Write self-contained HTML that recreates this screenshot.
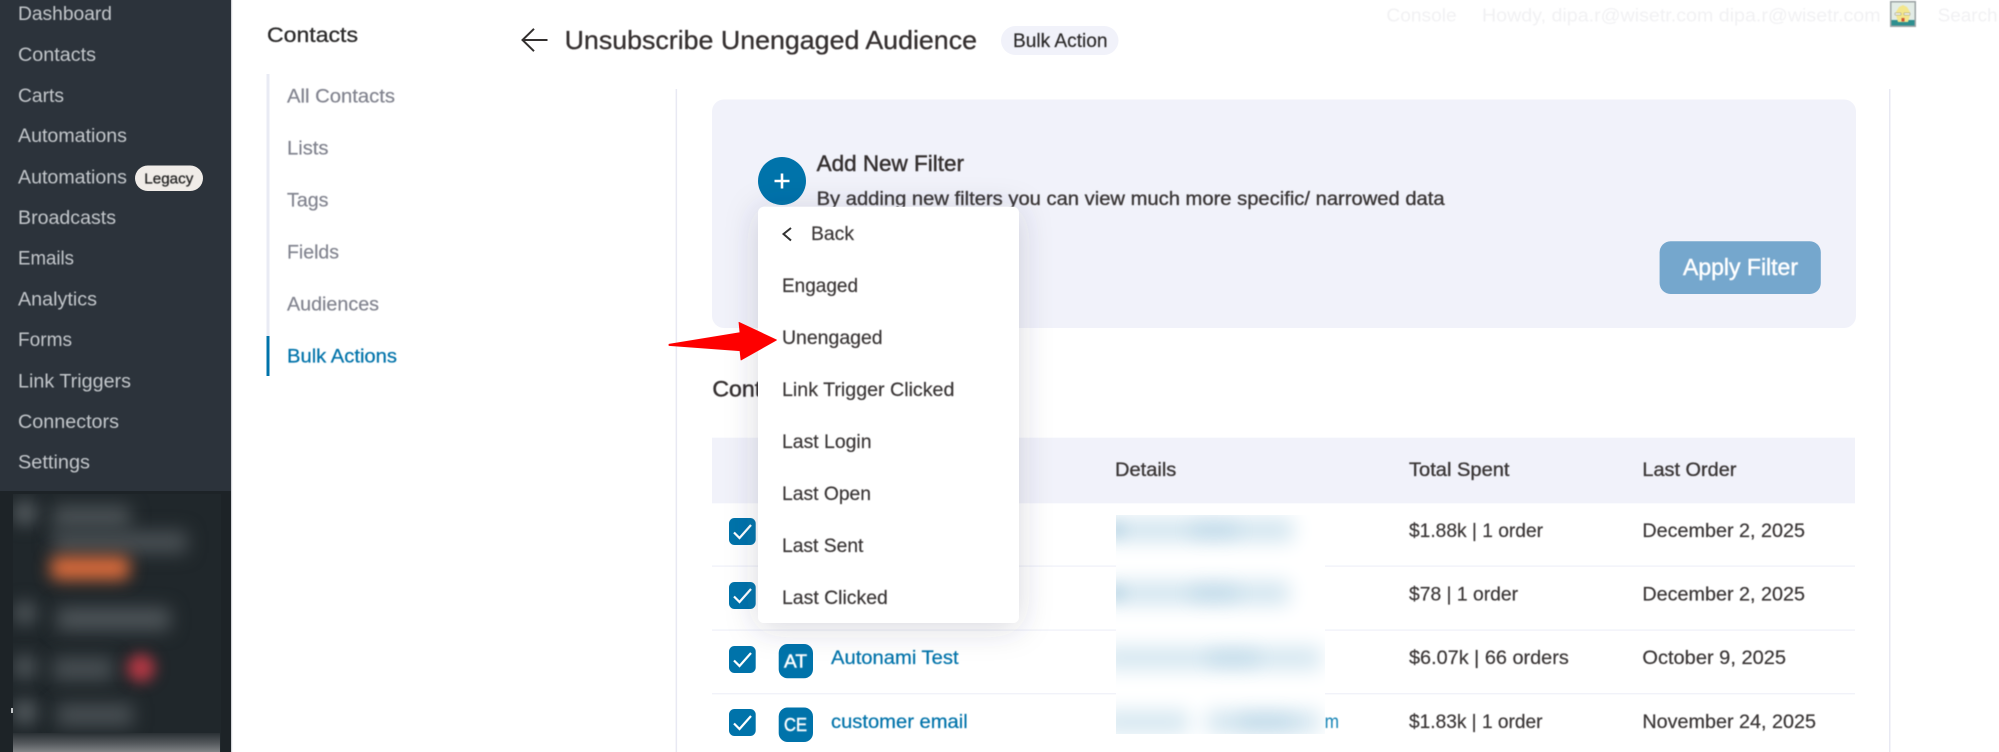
<!DOCTYPE html>
<html lang="en">
<head>
<meta charset="utf-8">
<title>Unsubscribe Unengaged Audience</title>
<style>
html,body{margin:0;padding:0;background:#fff;width:1999px;height:752px;overflow:hidden}
svg{display:block;position:absolute;left:0;top:0}
text{font-family:"Liberation Sans",sans-serif;font-size:18px;white-space:pre}
.soft{filter:blur(.5px)}
.side text{fill:#c4c8cc;font-size:19px}
.sub text{fill:#82848f;font-size:19px;stroke:#82848f;stroke-width:.2}
.dk{fill:#3a3636;stroke:#3a3636;stroke-width:.2;font-size:19.5px}
.dk2{fill:#3a3636;stroke:#3a3636;stroke-width:.35;font-size:19.5px}
.hd{fill:#353030;stroke:#353030;stroke-width:.45;font-size:22px}
.lnk{fill:#0073aa;stroke:#0073aa;stroke-width:.25;font-size:19.5px}
.faint{fill:#f1f1f3;font-size:19px}
.wh{fill:#fff;stroke:#fff;stroke-width:.45;font-size:18px}
.box{position:absolute;overflow:hidden}
.box div{position:absolute;left:-3000px}
</style>
</head>
<body>
<svg width="1999" height="752" viewBox="0 0 1999 752" xmlns="http://www.w3.org/2000/svg">
<defs>
  <filter id="sh" x="-30%" y="-20%" width="160%" height="140%"><feDropShadow dx="0" dy="4" stdDeviation="16" flood-color="#30345a" flood-opacity=".2"/></filter>
</defs>

<!-- WP sidebar -->
<rect x="0" y="0" width="231" height="491" fill="#2c333b"/>
<rect x="0" y="491" width="231" height="261" fill="#1d2327"/>
<rect x="231" y="0" width="1.2" height="752" fill="#d5d6da"/>
<rect x="11" y="708" width="2" height="5" fill="#c5c8ca"/>

<g class="side soft">
  <text x="18" y="20" textLength="94" lengthAdjust="spacingAndGlyphs">Dashboard</text>
  <text x="18" y="61" textLength="78" lengthAdjust="spacingAndGlyphs">Contacts</text>
  <text x="18" y="102" textLength="46" lengthAdjust="spacingAndGlyphs">Carts</text>
  <text x="18" y="142" textLength="109" lengthAdjust="spacingAndGlyphs">Automations</text>
  <text x="18" y="183.5" textLength="109" lengthAdjust="spacingAndGlyphs">Automations</text>
  <text x="18" y="224" textLength="98" lengthAdjust="spacingAndGlyphs">Broadcasts</text>
  <text x="18" y="264.5" textLength="56" lengthAdjust="spacingAndGlyphs">Emails</text>
  <text x="18" y="305.5" textLength="79" lengthAdjust="spacingAndGlyphs">Analytics</text>
  <text x="18" y="346" textLength="54" lengthAdjust="spacingAndGlyphs">Forms</text>
  <text x="18" y="387.5" textLength="113" lengthAdjust="spacingAndGlyphs">Link Triggers</text>
  <text x="18" y="428" textLength="101" lengthAdjust="spacingAndGlyphs">Connectors</text>
  <text x="18" y="468.5" textLength="72" lengthAdjust="spacingAndGlyphs">Settings</text>
</g>
<rect x="135" y="165.5" width="68" height="25.5" rx="12.75" fill="#f0ece8"/>
<text class="soft" x="144.3" y="183.5" textLength="49" lengthAdjust="spacingAndGlyphs" style="font-size:14.5px;fill:#222;stroke:#222;stroke-width:.25">Legacy</text>

<!-- Contacts sub nav -->
<text class="soft" x="267" y="42" textLength="91" lengthAdjust="spacingAndGlyphs" style="font-size:21.5px;fill:#2b2a2a;stroke:#2b2a2a;stroke-width:.3">Contacts</text>
<rect x="266.5" y="74" width="3" height="262" fill="#e9ebf4"/>
<rect x="266.5" y="336" width="3" height="40" fill="#0073aa"/>
<g class="sub soft">
  <text x="287" y="102.5" textLength="108" lengthAdjust="spacingAndGlyphs">All Contacts</text>
  <text x="287" y="154.5" textLength="41.5" lengthAdjust="spacingAndGlyphs">Lists</text>
  <text x="287" y="206.5" textLength="41.5" lengthAdjust="spacingAndGlyphs">Tags</text>
  <text x="287" y="258.5" textLength="52" lengthAdjust="spacingAndGlyphs">Fields</text>
  <text x="287" y="310.5" textLength="92" lengthAdjust="spacingAndGlyphs">Audiences</text>
</g>
<text class="lnk soft" x="287" y="362.5" textLength="110" lengthAdjust="spacingAndGlyphs">Bulk Actions</text>

<!-- Top bar faint -->
<g class="faint soft">
  <text x="1386.4" y="21.5" textLength="70.3" lengthAdjust="spacingAndGlyphs">Console</text>
  <text x="1482" y="21.5" textLength="398.6" lengthAdjust="spacingAndGlyphs">Howdy, dipa.r@wisetr.com dipa.r@wisetr.com</text>
  <text x="1937.6" y="21.5" textLength="60" lengthAdjust="spacingAndGlyphs">Search</text>
</g>
<g class="soft">
  <rect x="1890" y="1" width="26" height="26" fill="#9aa2a3"/>
  <rect x="1891.5" y="2.5" width="23" height="23" fill="#e3ece6"/>
  <rect x="1891.5" y="20" width="23" height="5.5" fill="#2e8f8f"/>
  <path d="M1896 12l3-5 4-2 4 2 3 5v3l-2 7h-10l-2-7z" fill="#f3e68c"/>
  <path d="M1895 13h6v2h-6zm9 0h6v2h-6z" fill="#fff" stroke="#8a8a70" stroke-width=".5"/>
  <path d="M1901.5 18h3v3.5h-3z" fill="#d0552f"/>
</g>

<!-- Title row -->
<path d="M547.5 40H523M534 28.8 522.5 40 534 51.2" fill="none" stroke="#33302f" stroke-width="2"/>
<text class="soft" x="564.6" y="49" textLength="412.4" lengthAdjust="spacingAndGlyphs" style="font-size:26px;fill:#353030;stroke:#353030;stroke-width:.3">Unsubscribe Unengaged Audience</text>
<rect x="1001" y="26" width="117.5" height="29" rx="14.5" fill="#f1f2fa"/>
<text class="dk soft" x="1013" y="47" textLength="94.5" lengthAdjust="spacingAndGlyphs" style="fill:#2a2828;stroke:#2a2828">Bulk Action</text>

<!-- Panel lines -->
<rect x="675.6" y="89" width="1.5" height="663" fill="#e8e9f3"/>
<rect x="1889" y="89" width="1.5" height="663" fill="#e8e9f3"/>

<!-- Filter box -->
<rect x="712" y="99.5" width="1144" height="228.5" rx="12" fill="#f1f2fa"/>
<circle cx="782" cy="181" r="24" fill="#0073aa"/>
<path d="M774.5 181h15M782 173.5v15" stroke="#fff" stroke-width="2.6" fill="none"/>
<text class="hd soft" x="816.6" y="171" textLength="147.4" lengthAdjust="spacingAndGlyphs">Add New Filter</text>
<text class="dk2 soft" x="816.6" y="205" textLength="628" lengthAdjust="spacingAndGlyphs">By adding new filters you can view much more specific/ narrowed data</text>
<rect x="1659.6" y="241.3" width="161.2" height="52.7" rx="11" fill="#75a7cd"/>
<text class="wh soft" x="1683" y="275" textLength="115" lengthAdjust="spacingAndGlyphs" style="font-size:23px">Apply Filter</text>

<!-- Contacts heading & table -->
<text class="hd soft" x="712.4" y="396.5" textLength="91" lengthAdjust="spacingAndGlyphs">Contacts</text>
<rect x="712" y="437.7" width="1143" height="65.6" fill="#f1f2fa"/>
<rect x="712" y="565.4" width="1143" height="1.4" fill="#f1f2f9"/>
<rect x="712" y="629.4" width="1143" height="1.4" fill="#f1f2f9"/>
<rect x="712" y="693" width="1143" height="1.4" fill="#f1f2f9"/>

<text class="dk2 soft" x="1115" y="476" textLength="61.3" lengthAdjust="spacingAndGlyphs">Details</text>
<text class="dk2 soft" x="1409" y="476" textLength="100.5" lengthAdjust="spacingAndGlyphs">Total Spent</text>
<text class="dk2 soft" x="1642.4" y="476" textLength="94" lengthAdjust="spacingAndGlyphs">Last Order</text>

<g class="soft">
  <text class="dk" x="1409" y="537" textLength="134" lengthAdjust="spacingAndGlyphs">$1.88k | 1 order</text>
  <text class="dk" x="1409" y="600.5" textLength="109" lengthAdjust="spacingAndGlyphs">$78 | 1 order</text>
  <text class="dk" x="1409" y="664" textLength="159.8" lengthAdjust="spacingAndGlyphs">$6.07k | 66 orders</text>
  <text class="dk" x="1409" y="728" textLength="133.5" lengthAdjust="spacingAndGlyphs">$1.83k | 1 order</text>
  <text class="dk" x="1642.4" y="537" textLength="162.6" lengthAdjust="spacingAndGlyphs">December 2, 2025</text>
  <text class="dk" x="1642.4" y="600.5" textLength="162.6" lengthAdjust="spacingAndGlyphs">December 2, 2025</text>
  <text class="dk" x="1642.4" y="664" textLength="143.6" lengthAdjust="spacingAndGlyphs">October 9, 2025</text>
  <text class="dk" x="1642.4" y="728" textLength="173.6" lengthAdjust="spacingAndGlyphs">November 24, 2025</text>
</g>

<!-- Checkboxes -->
<g fill="#0073aa">
  <rect x="729" y="518" width="26.7" height="27" rx="5.5"/>
  <rect x="729" y="582" width="26.7" height="27" rx="5.5"/>
  <rect x="729" y="646" width="26.7" height="27" rx="5.5"/>
  <rect x="729" y="709" width="26.7" height="27" rx="5.5"/>
</g>
<g fill="none" stroke="#fff" stroke-width="2.2">
  <path d="M734 532.5l5.5 5.5 11.5-13"/>
  <path d="M734 596.5l5.5 5.5 11.5-13"/>
  <path d="M734 660.5l5.5 5.5 11.5-13"/>
  <path d="M734 723.5l5.5 5.5 11.5-13"/>
</g>

<!-- Avatars & names -->
<rect x="778.7" y="644" width="34.3" height="34.3" rx="9" fill="#0073aa"/>
<rect x="778.7" y="707.5" width="34.3" height="34.5" rx="9" fill="#0073aa"/>
<text class="wh soft" x="784" y="667.5" textLength="23" lengthAdjust="spacingAndGlyphs" style="font-size:18.5px">AT</text>
<text class="wh soft" x="784" y="731" textLength="23" lengthAdjust="spacingAndGlyphs" style="font-size:18.5px">CE</text>
<text class="lnk soft" x="831" y="664" textLength="127.6" lengthAdjust="spacingAndGlyphs">Autonami Test</text>
<text class="lnk soft" x="831" y="728" textLength="136.7" lengthAdjust="spacingAndGlyphs">customer email</text>
<text class="soft" x="1324.6" y="728" textLength="14.4" lengthAdjust="spacingAndGlyphs" style="font-size:19.5px;fill:#1583b5">m</text>

<!-- Dropdown popup -->
<rect x="758" y="206.7" width="261" height="416.3" rx="6" fill="#fff" filter="url(#sh)"/>
<path d="M791 228l-7.5 6 7.5 6.5" fill="none" stroke="#333" stroke-width="2"/>
<g class="soft">
  <text class="dk" x="811" y="240" textLength="43" lengthAdjust="spacingAndGlyphs">Back</text>
  <text class="dk" x="782" y="292" textLength="76" lengthAdjust="spacingAndGlyphs">Engaged</text>
  <text class="dk" x="782" y="344" textLength="100.6" lengthAdjust="spacingAndGlyphs">Unengaged</text>
  <text class="dk" x="782" y="396" textLength="172.4" lengthAdjust="spacingAndGlyphs">Link Trigger Clicked</text>
  <text class="dk" x="782" y="448" textLength="89.5" lengthAdjust="spacingAndGlyphs">Last Login</text>
  <text class="dk" x="782" y="500" textLength="89" lengthAdjust="spacingAndGlyphs">Last Open</text>
  <text class="dk" x="782" y="552" textLength="81.4" lengthAdjust="spacingAndGlyphs">Last Sent</text>
  <text class="dk" x="782" y="604" textLength="105.8" lengthAdjust="spacingAndGlyphs">Last Clicked</text>
</g>

<!-- Red arrow -->
<path d="M776.5 340 739 322.3 740 332.7 669 344.3 669 345.5 740 350.7 741 360Z" fill="#fe0000" stroke="#fe0000" stroke-width=".8" stroke-linejoin="round"/>
</svg>

<!-- Blurred sidebar region (shadows of off-canvas boxes) -->
<div class="box" style="left:13px;top:494px;width:208px;height:258px;background:#20272b">
  <div style="top:6px;width:26px;height:26px;border-radius:50%;box-shadow:2999px 0 16px #50575b"></div>
  <div style="top:12px;width:77px;height:22px;box-shadow:3040px 0 18px #4d5458"></div>
  <div style="top:37px;width:134px;height:22px;box-shadow:3040px 0 18px #4a5155"></div>
  <div style="top:106px;width:26px;height:26px;border-radius:50%;box-shadow:2999px 0 16px #484f53"></div>
  <div style="top:113.5px;width:113px;height:22px;box-shadow:3044px 0 18px #50575b"></div>
  <div style="top:160px;width:26px;height:26px;border-radius:50%;box-shadow:2999px 0 16px #484f53"></div>
  <div style="top:163.5px;width:60px;height:22px;box-shadow:3040px 0 18px #4a5155"></div>
  <div style="top:205px;width:26px;height:26px;border-radius:50%;box-shadow:2999px 0 16px #50575b"></div>
  <div style="top:210px;width:76px;height:22px;box-shadow:3044px 0 18px #4a5155"></div>
  <div style="top:62px;width:80px;height:24px;border-radius:9px;box-shadow:3037px 0 16px #d86b3c"></div>
  <div style="top:160px;width:28px;height:28px;border-radius:50%;box-shadow:3114px 0 14px #b23844"></div>
  <div style="left:0;top:239px;width:207px;height:19px;background:linear-gradient(#2a3034,#55595d 55%,#808386)"></div>
</div>

<!-- Redacted e-mails -->
<div class="box" style="left:1115.5px;top:515px;width:209px;height:218.5px;background:#fff">
  <div style="top:4px;width:192px;height:22px;box-shadow:2985px 0 20px #d0e4ef"></div>
  <div style="top:67px;width:188px;height:22px;box-shadow:2985px 0 20px #d0e4ef"></div>
  <div style="top:132px;width:220px;height:22px;box-shadow:2985px 0 20px #d3e6f0"></div>
  <div style="top:196px;width:88px;height:22px;box-shadow:2985px 0 20px #d3e6f0"></div>
  <div style="top:196px;width:112px;height:22px;box-shadow:3091px 0 20px #d0e4ef"></div>
  <div style="top:6px;width:48px;height:18px;border-radius:9px;box-shadow:3074px 0 18px rgba(120,175,208,.2)"></div>
  <div style="top:69px;width:48px;height:18px;border-radius:9px;box-shadow:3074px 0 18px rgba(120,175,208,.2)"></div>
  <div style="top:134px;width:52px;height:18px;border-radius:9px;box-shadow:3091px 0 18px rgba(120,175,208,.2)"></div>
  <div style="top:198px;width:56px;height:18px;border-radius:9px;box-shadow:3122px 0 18px rgba(120,175,208,.2)"></div>
  <div style="top:7px;width:16px;height:16px;border-radius:50%;box-shadow:2992px 0 14px rgba(110,165,200,.3)"></div>
  <div style="top:70px;width:16px;height:16px;border-radius:50%;box-shadow:2992px 0 14px rgba(110,165,200,.3)"></div>
</div>
</body>
</html>
